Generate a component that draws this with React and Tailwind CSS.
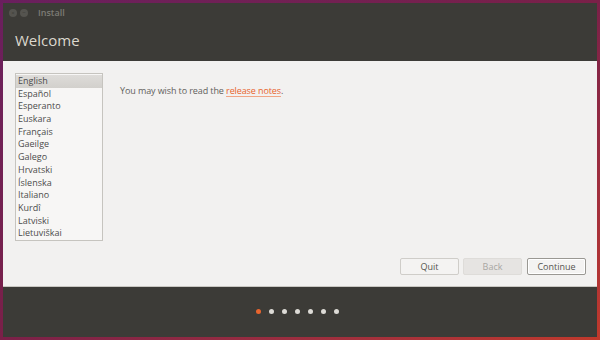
const languages = [
  'English',
  'Español',
  'Esperanto',
  'Euskara',
  'Français',
  'Gaeilge',
  'Galego',
  'Hrvatski',
  'Íslenska',
  'Italiano',
  'Kurdî',
  'Latviski',
  'Lietuviškai',
]

export default function App() {
  return (
    <div className="w-[600px] h-[340px] p-[3px] bg-gradient-to-br from-[#6a1f5e] via-[#7a2048] to-[#c0392b] font-['Open_Sans',sans-serif]">
      <div className="w-full h-full flex flex-col bg-[#3c3b37]">
        {/* title bar */}
        <div className="h-[19px] flex items-center pl-[6px] pt-[1px]">
          <div className="flex gap-[3px]">
            <span className="w-[8px] h-[8px] rounded-full bg-[#55544f] flex items-center justify-center text-[6px] leading-none text-[#3c3b37]">×</span>
            <span className="w-[8px] h-[8px] rounded-full bg-[#55544f] flex items-center justify-center text-[6px] leading-none text-[#3c3b37]">−</span>
          </div>
          <span className="ml-[10px] text-[9px] font-semibold text-[#7d7b75]">Install</span>
        </div>

        {/* header */}
        <div className="h-[39px] flex items-center pl-[12px] pb-[2px]">
          <h1 className="text-[15px] text-[#dcd8ce]">Welcome</h1>
        </div>

        {/* content */}
        <div className="h-[226px] bg-[#f2f1f0] flex flex-col border-b border-[#c9c7c2]">
          <div className="flex pt-[12px] pl-[12px]">
            <ul className="w-[88px] h-[168px] border border-[#c6c4bf] bg-[#f7f6f5] text-[9px] text-[#4c4c4c] pt-[1px]">
              {languages.map((lang, i) => (
                <li
                  key={lang}
                  className={
                    'h-[12.7px] leading-[12.7px] pl-[2px] ' +
                    (i === 0 ? 'bg-gradient-to-b from-[#dedcd9] to-[#d2d0cc]' : '')
                  }
                >
                  {lang}
                </li>
              ))}
            </ul>
            <p className="ml-[17px] mt-[11px] text-[9px] tracking-[-0.1px] text-[#62615d]">
              You may wish to read the{' '}
              <a className="text-[#e8642c] underline decoration-[#f0a585] underline-offset-2">release notes</a>.
            </p>
          </div>
          <div className="mt-auto mb-[11px] flex justify-end gap-[4px] pr-[11px]">
            <button className="w-[59px] h-[17px] rounded-[2px] border border-[#cfcdc9] bg-[#f4f3f2] text-[9px] text-[#55544f]">
              Quit
            </button>
            <button className="w-[59px] h-[17px] rounded-[2px] border border-[#dedcd9] bg-[#e6e4e2] text-[9px] text-[#a9a7a3]">
              Back
            </button>
            <button className="ml-[1px] w-[59px] h-[17px] rounded-[2px] border border-[#9a9893] bg-[#f4f3f2] text-[9px] text-[#55544f] shadow-[inset_0_0_0_1px_#fff]">
              Continue
            </button>
          </div>
        </div>

        {/* footer */}
        <div className="flex-1 flex items-center justify-center pb-[1px] pr-[6px]">
          <div className="flex gap-[8px]">
            <span className="w-[5px] h-[5px] rounded-full bg-[#e9652e]" />
            <span className="w-[5px] h-[5px] rounded-full bg-[#dddbd6]" />
            <span className="w-[5px] h-[5px] rounded-full bg-[#dddbd6]" />
            <span className="w-[5px] h-[5px] rounded-full bg-[#dddbd6]" />
            <span className="w-[5px] h-[5px] rounded-full bg-[#dddbd6]" />
            <span className="w-[5px] h-[5px] rounded-full bg-[#dddbd6]" />
            <span className="w-[5px] h-[5px] rounded-full bg-[#dddbd6]" />
          </div>
        </div>
      </div>
    </div>
  )
}
